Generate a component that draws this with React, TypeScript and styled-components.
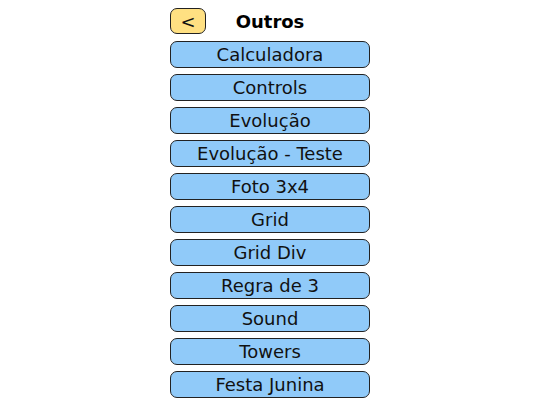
import React from 'react'
import { createGlobalStyle, styled } from 'styled-components'

const GlobalStyles = createGlobalStyle`
  html, body {
    margin: 0;
    padding: 0;
    background: #ffffff;
  }

  body {
    font-family: 'DejaVu Sans', Verdana, sans-serif;
    color: #111111;
  }
`

const Menu = styled.div`
  width: 200px;
  margin: 0 auto;
  padding-top: 8px;
  display: flex;
  flex-direction: column;
  row-gap: 6px;
`

const Header = styled.div`
  position: relative;
  height: 26px;
  display: flex;
  align-items: center;
  justify-content: center;
  margin-bottom: 1px;
`

const BackButton = styled.button`
  position: absolute;
  left: 0;
  top: 0;
  width: 36px;
  height: 26px;
  box-sizing: border-box;
  background: #ffe082;
  border: 1px solid #222222;
  border-radius: 7px;
  font-family: inherit;
  font-size: 18px;
  color: #111111;
  padding: 0;
  display: flex;
  align-items: center;
  justify-content: center;
`

const Title = styled.h1`
  margin: 0;
  font-size: 18px;
  font-weight: bold;
  color: #000000;
`

const Item = styled.button`
  width: 200px;
  height: 27px;
  box-sizing: border-box;
  background: #90caf9;
  border: 1px solid #222222;
  border-radius: 7px;
  font-family: inherit;
  font-size: 18px;
  color: #111111;
  padding: 0;
  display: flex;
  align-items: center;
  justify-content: center;
`

const items = [
  'Calculadora',
  'Controls',
  'Evolução',
  'Evolução - Teste',
  'Foto 3x4',
  'Grid',
  'Grid Div',
  'Regra de 3',
  'Sound',
  'Towers',
  'Festa Junina',
]

const App = () => (
  <>
    <GlobalStyles />
    <Menu>
      <Header>
        <BackButton>&lt;</BackButton>
        <Title>Outros</Title>
      </Header>
      {items.map((label) => (
        <Item key={label}>{label}</Item>
      ))}
    </Menu>
  </>
)

export default App
